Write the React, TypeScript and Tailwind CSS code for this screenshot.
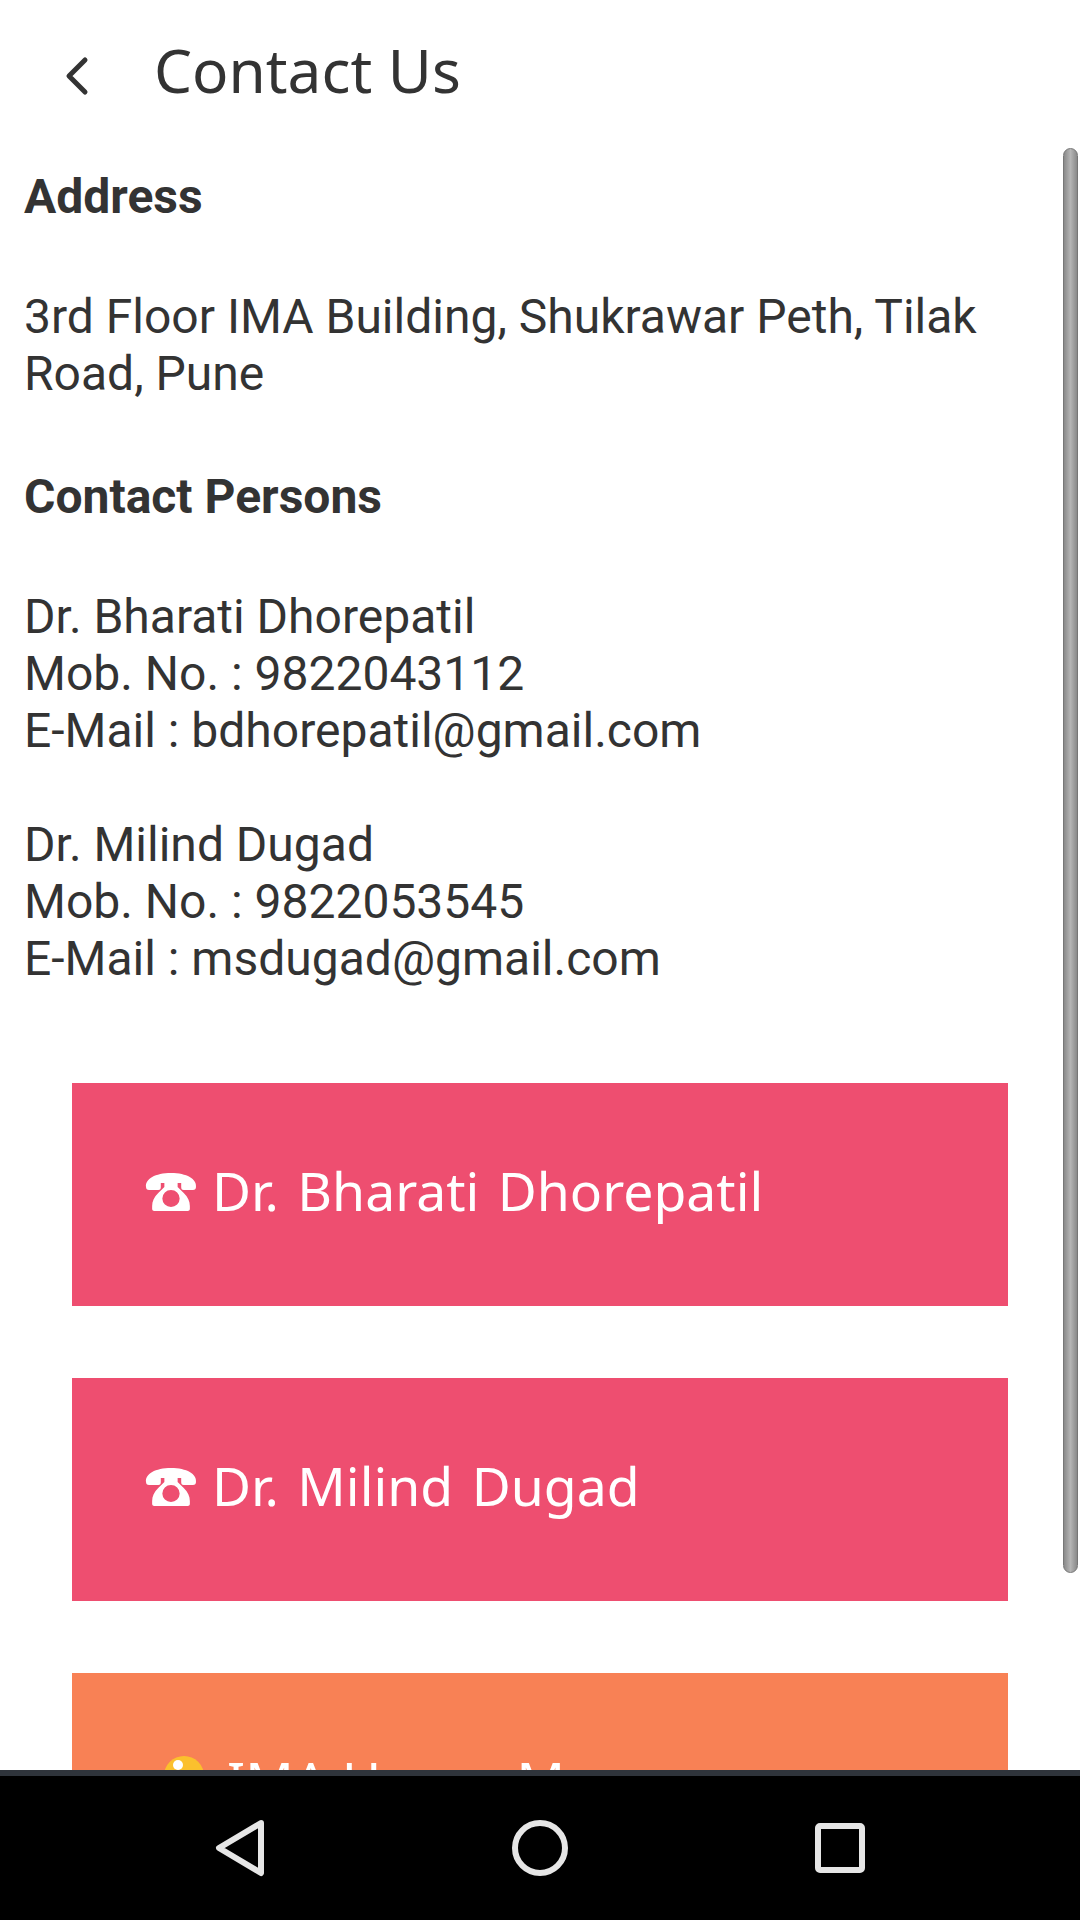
import React from "react";

const body = "font-['Roboto',sans-serif]";
const btn = "font-['Noto_Sans','DejaVu_Sans',sans-serif]";

const PhoneIcon = () => (
  <svg className="mt-[19px] mr-[15px] shrink-0" width="52" height="38" viewBox="0 0 51 38" preserveAspectRatio="none">
    <path
      fill="#ffffff"
      fillRule="evenodd"
      d="M1 14 C0 6 10 0 25.5 0 C41 0 51 6 50 14 C50 16 49 17 47 17 L38 17 C36 17 35.5 16 35.5 14 L35.5 10 L32 10 L32 14 L38 20 C42 24 44 28 44 33 L44 36 C44 37 43 38 42 38 L9 38 C8 38 7 37 7 36 L7 33 C7 28 9 24 13 20 L19 14 L19 10 L15.5 10 L15.5 14 C15.5 16 15 17 13 17 L4 17 C2 17 1 16 1 14 Z M25.5 17 A8.5 8.5 0 1 0 25.5 34 A8.5 8.5 0 1 0 25.5 17 Z"
    />
  </svg>
);

const CallButton: React.FC<{ name: string; className: string }> = ({ name, className }) => (
  <div className={`${className} h-[223px] mb-[72px] pl-[73px] pt-[71px] flex items-start text-white text-[53.5px] [word-spacing:4.5px] leading-[74px] ${btn}`}>
    <PhoneIcon />
    {name}
  </div>
);

const App: React.FC = () => {
  return (
    <div className="w-[1080px] h-[1920px] bg-white flex flex-col overflow-hidden text-[#333333]">
      <div className="h-[145px] shrink-0 flex items-center">
        <svg className="ml-[64px] mt-[6px]" width="26" height="40" viewBox="0 0 26 40" fill="none">
          <path d="M21 4 L5 20 L21 36" stroke="#333333" strokeWidth="5" strokeLinecap="round" strokeLinejoin="round" />
        </svg>
        <h1 className="ml-[64px] mb-[4px] text-[60.3px] font-normal leading-none font-['Noto_Sans',sans-serif]">Contact Us</h1>
      </div>

      <div className="relative flex-1 overflow-hidden">
        <div className={`${body} pl-[24px] pr-[90px] text-[48px] leading-[57px]`}>
          <div className="pt-[23px] font-bold">Address</div>
          <div className="mt-[63px]">3rd Floor IMA Building, Shukrawar Peth, Tilak Road, Pune</div>
          <div className="mt-[66px] font-bold">Contact Persons</div>
          <div className="mt-[63px]">
            Dr. Bharati Dhorepatil
            <br />
            Mob. No. : 9822043112
            <br />
            E-Mail : bdhorepatil@gmail.com
          </div>
          <div className="mt-[57px]">
            Dr. Milind Dugad
            <br />
            Mob. No. : 9822053545
            <br />
            E-Mail : msdugad@gmail.com
          </div>
        </div>

        <div className="mt-[96px] ml-[72px] w-[936px]">
          <CallButton name="Dr. Bharati Dhorepatil" className="bg-[#ee4e70]" />
          <CallButton name="Dr. Milind Dugad" className="bg-[#ee4e70]" />
          <div className={`bg-[#f88155] h-[223px] pl-[92px] pt-[71px] text-white text-[53.5px] leading-[74px] flex items-start ${btn}`}>
            <svg className="mt-[12px] mr-[23px] shrink-0" width="40" height="56" viewBox="0 0 40 56">
              <circle cx="20" cy="20" r="20" fill="#fbc02d" />
              <circle cx="14" cy="9" r="5" fill="#ffffff" />
            </svg>
            IMA House Map
          </div>
        </div>

        {/* scrollbar */}
        <div className="absolute right-[2px] top-[3px] w-[15px] h-[1425px] rounded-full border border-[#777777] bg-gradient-to-r from-[#8a8a8a] via-[#b5b5b5] to-[#8a8a8a]" />
      </div>

      {/* android nav bar */}
      <div className="h-[6px] shrink-0 bg-[#2f343b]" />
      <div className="h-[144px] shrink-0 bg-black relative flex items-start">
        <svg className="absolute left-[214px] top-[42px]" width="52" height="60" viewBox="0 0 52 60" fill="none">
          <path d="M47 5 L5 30 L47 55 Z" stroke="#e6e6e6" strokeWidth="6" strokeLinejoin="round" />
        </svg>
        <svg className="absolute left-[510px] top-[42px]" width="60" height="60" viewBox="0 0 60 60" fill="none">
          <circle cx="30" cy="30" r="25" stroke="#e6e6e6" strokeWidth="6" />
        </svg>
        <svg className="absolute left-[812px] top-[44px]" width="56" height="56" viewBox="0 0 56 56" fill="none">
          <rect x="6" y="6" width="44" height="44" rx="2" stroke="#e6e6e6" strokeWidth="6" />
        </svg>
      </div>
    </div>
  );
};

export default App;
